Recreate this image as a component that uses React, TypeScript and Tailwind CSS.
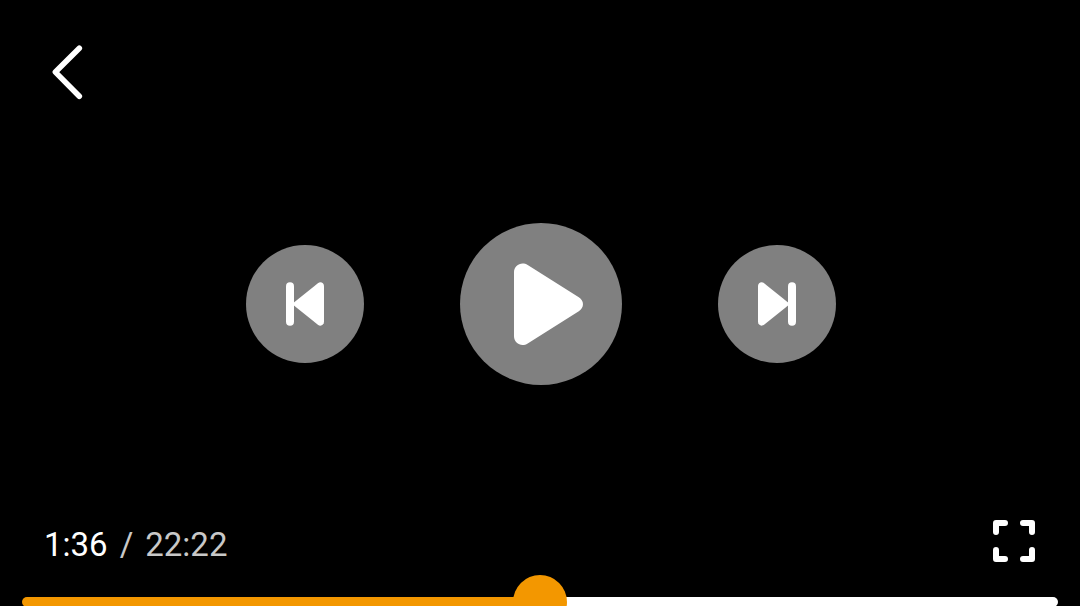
import { useState } from "react";

function BackIcon() {
  return (
    <svg viewBox="0 0 32 56" className="h-14 w-8" fill="none" aria-hidden="true">
      <path
        d="M28.3 4.2 4.4 28.1 28.3 52.2"
        stroke="white"
        strokeWidth="5.6"
        strokeLinecap="round"
        strokeLinejoin="round"
      />
    </svg>
  );
}

function SkipIcon({ flipped = false }: { flipped?: boolean }) {
  return (
    <svg
      viewBox="0 0 38 44"
      className={flipped ? "h-11 w-[38px] -scale-x-100" : "h-11 w-[38px]"}
      fill="white"
      aria-hidden="true"
    >
      <rect x="0" y="0.3" width="8" height="43.4" rx="4" />
      <path d="M7.6 20.7 31.9 1.2C34.5-.8 38 .8 38 4.2v35.6c0 3.4-3.5 5-6.1 3L7.6 23.3z" />
    </svg>
  );
}

function PlayIcon() {
  return (
    <svg viewBox="0 0 162 162" className="size-full" fill="white" aria-hidden="true">
      <path d="M54 49.3c0-7.3 7.6-11.2 13.7-7.3l51.1 32.2c5.6 3.6 5.6 10.4 0 14L67.7 120.4c-6.1 3.9-13.7 0-13.7-7.3z" />
    </svg>
  );
}

function FullscreenIcon() {
  return (
    <svg viewBox="0 0 42 42" className="size-[42px]" fill="none" aria-hidden="true">
      <path
        d="M3 12V3h9M30 3h9v9M39 30v9h-9M12 39H3v-9"
        stroke="white"
        strokeWidth="6"
        strokeLinecap="round"
        strokeLinejoin="round"
      />
    </svg>
  );
}

export default function App() {
  const [progress, setProgress] = useState(50);

  return (
    <div className="flex h-screen flex-col overflow-hidden bg-black font-[Roboto,sans-serif] text-white">
      <header className="flex px-[51px] pt-11">
        <button type="button" aria-label="Back">
          <BackIcon />
        </button>
      </header>

      <main className="flex flex-1 items-center justify-center gap-24 pl-px">
        <button
          type="button"
          aria-label="Previous"
          className="flex size-[118px] items-center justify-center rounded-full bg-[#808080]"
        >
          <SkipIcon />
        </button>
        <button type="button" aria-label="Play" className="size-[162px] rounded-full bg-[#808080]">
          <PlayIcon />
        </button>
        <button
          type="button"
          aria-label="Next"
          className="flex size-[118px] items-center justify-center rounded-full bg-[#808080]"
        >
          <SkipIcon flipped />
        </button>
      </main>

      <footer className="px-[22px] pt-3">
        <div className="flex items-start justify-between pr-[23px] pl-[22px]">
          <p className="flex gap-3 pt-1 text-[33px] leading-[42px]">
            <span>1:36</span>
            <span className="text-[#c8c8c8]">/</span>
            <span className="text-[#c8c8c8]">22:22</span>
          </p>
          <button type="button" aria-label="Full screen">
            <FullscreenIcon />
          </button>
        </div>
        <input
          type="range"
          aria-label="Seek"
          min={0}
          max={100}
          value={progress}
          onChange={(e) => setProgress(Number(e.target.value))}
          style={{
            backgroundImage: `linear-gradient(to right, #f39700 ${progress}%, #ffffff ${progress}%)`,
          }}
          className="mt-[31px] -mb-px block h-[10px] w-full cursor-pointer appearance-none rounded-[5px] outline-none [&::-webkit-slider-thumb]:size-[54px] [&::-webkit-slider-thumb]:appearance-none [&::-webkit-slider-thumb]:rounded-full [&::-webkit-slider-thumb]:bg-[#f39700]"
        />
      </footer>
    </div>
  );
}
